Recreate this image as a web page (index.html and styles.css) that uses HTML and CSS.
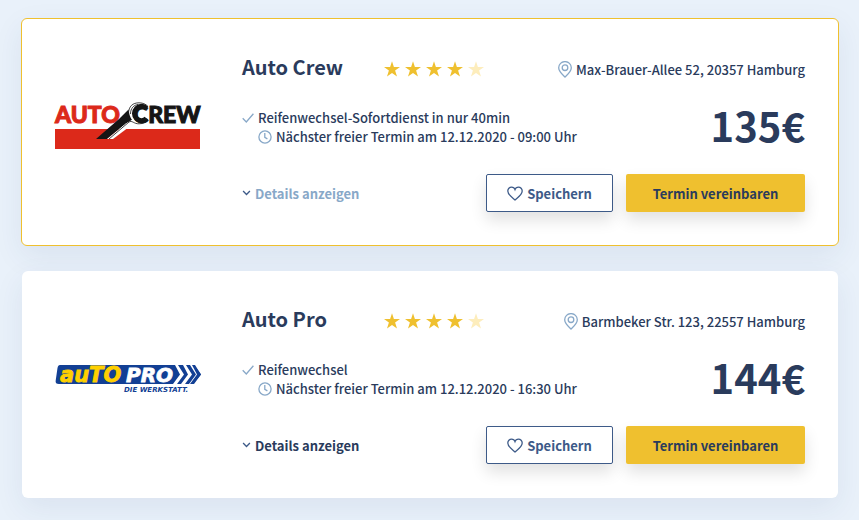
FILE: index.html
```html
<!DOCTYPE html>
<html lang="de">
<head>
<meta charset="utf-8">
<meta name="viewport" content="width=device-width, initial-scale=1">
<title>Werkstätten</title>
<link rel="stylesheet" href="styles.css">
</head>
<body>
<svg class="sprite" aria-hidden="true">
  <symbol id="star" viewBox="0 0 16 16"><path d="M8 .3 9.900 6H16l-4.900 3.600 1.900 5.900L8 11.900 3 15.500l1.900-5.900L0 6h6.100z" fill="currentColor"/></symbol>
  <symbol id="pin" viewBox="0 0 14 17"><path d="M7 16C4.500 13.600.7 10.500.7 6.700a6.300 6.100 0 0 1 12.600 0C13.300 10.500 9.500 13.600 7 16z"/><circle cx="7" cy="6.700" r="2.800"/></symbol>
  <symbol id="check" viewBox="0 0 12 10"><path d="M.7 5.300 4.300 9 11.400.8"/></symbol>
  <symbol id="clock" viewBox="0 0 14 14"><circle cx="7" cy="7" r="6.100"/><path d="M6.800 3v4.400l2.600 1.500"/></symbol>
  <symbol id="chevron" viewBox="0 0 8 6"><path d="M.6 1 4 4.500 7.400 1"/></symbol>
  <symbol id="heart" viewBox="0 0 16 15"><path d="M8 13.900C5.200 11.500.8 8.700.8 5A3.800 3.800 0 0 1 4.600 1.100C6.300 1.100 7.500 2.100 8 3.500 8.500 2.100 9.700 1.100 11.400 1.100A3.800 3.800 0 0 1 15.200 5C15.200 8.700 10.800 11.500 8 13.900z"/></symbol>
</svg>
<main class="results">
  <article class="card card-active">
    <svg class="logo" viewBox="0 0 147 50" role="img" aria-label="Auto Crew">
      <rect x="0" y="27" width="145" height="20" fill="#dc291a"/>
      <text class="crew-text crew-red" x="0" y="21">AUTO</text>
      <text class="crew-text" x="78" y="21">CREW</text>
      <path d="M41 37 64 17 73.500 7.500C74 12 75 15 77 18L71 21.500 52 37z" fill="#151515"/>
      <path d="M52 37 71 21.500 77 18 80 20.500 58 37z" fill="#fff"/>
      <path d="M54 37 74 20c3-2 5 2 10 1.800 4 0 7-1.500 9-3.800M73.500 12C73.500 4 78 .8 84 .8c4 0 7 1.500 9 3.700M75.500 12C75.500 6 79 3 83 2.500" fill="none" stroke="#151515" stroke-width=".8"/>
      <path d="M91.500 6.500a7 7.200 0 1 0 0 10" fill="none" stroke="#151515" stroke-width="5"/>
    </svg>
    <div class="content">
      <header class="head">
        <h2 class="name">Auto Crew</h2>
        <div class="stars" role="img" aria-label="4 von 5 Sternen">
          <svg><use href="#star"/></svg><svg><use href="#star"/></svg><svg><use href="#star"/></svg><svg><use href="#star"/></svg><svg class="off"><use href="#star"/></svg>
        </div>
        <address class="place"><svg class="line pin"><use href="#pin"/></svg>Max-Brauer-Allee 52, 20357 Hamburg</address>
      </header>
      <div class="info">
        <ul class="facts">
          <li><svg class="line check"><use href="#check"/></svg>Reifenwechsel-Sofortdienst in nur 40min</li>
          <li class="next"><svg class="line clock"><use href="#clock"/></svg>Nächster freier Termin am 12.12.2020 - 09:00 Uhr</li>
        </ul>
        <strong class="price">135€</strong>
      </div>
      <footer class="actions">
        <button type="button" class="details details-hover"><svg class="line chevron"><use href="#chevron"/></svg>Details anzeigen</button>
        <button type="button" class="btn save"><svg class="line heart"><use href="#heart"/></svg>Speichern</button>
        <button type="button" class="btn book">Termin vereinbaren</button>
      </footer>
    </div>
  </article>
  <article class="card">
    <svg class="logo" viewBox="0 0 147 50" role="img" aria-label="Auto Pro – Die Werkstatt">
      <path d="M5 11H139L146 20.500 138 30H4Q0 30 .7 26.500L2.500 14Q3 11 5 11z" fill="#123f94"/>
      <text class="pro-text pro-yellow" x="5" y="28">auTO</text>
      <text class="pro-text" x="71" y="28">PRO</text>
      <path d="M120 11h3l6 9.500-7 9.500h-4l7-9.500zM128 11h3l6 9.500-7 9.500h-4l7-9.500zM135 11h3l7 9.500-8 9.500h-3l7-9.500z" fill="#fff"/>
      <path d="M137 11h3l6 9.500-7 9.500h-4l7-9.500z" fill="#123f94"/>
      <text class="pro-claim" x="69" y="38">DIE WERKSTATT.</text>
    </svg>
    <div class="content">
      <header class="head">
        <h2 class="name">Auto Pro</h2>
        <div class="stars" role="img" aria-label="4 von 5 Sternen">
          <svg><use href="#star"/></svg><svg><use href="#star"/></svg><svg><use href="#star"/></svg><svg><use href="#star"/></svg><svg class="off"><use href="#star"/></svg>
        </div>
        <address class="place"><svg class="line pin"><use href="#pin"/></svg>Barmbeker Str. 123, 22557 Hamburg</address>
      </header>
      <div class="info">
        <ul class="facts">
          <li><svg class="line check"><use href="#check"/></svg>Reifenwechsel</li>
          <li class="next"><svg class="line clock"><use href="#clock"/></svg>Nächster freier Termin am 12.12.2020 - 16:30 Uhr</li>
        </ul>
        <strong class="price">144€</strong>
      </div>
      <footer class="actions">
        <button type="button" class="details"><svg class="line chevron"><use href="#chevron"/></svg>Details anzeigen</button>
        <button type="button" class="btn save"><svg class="line heart"><use href="#heart"/></svg>Speichern</button>
        <button type="button" class="btn book">Termin vereinbaren</button>
      </footer>
    </div>
  </article>
</main>
</body>
</html>
```
FILE: styles.css
```css
* { box-sizing: border-box; }
body {
  margin: 0;
  background: #e9f1fa;
  color: #2a3b5c;
  font: 500 13px/19px "Source Sans Pro", "Noto Sans CJK SC", sans-serif;
}
.sprite { position: absolute; width: 0; height: 0; }
.results {
  display: flex;
  flex-direction: column;
  gap: 25px;
  padding: 18px 20px 22px 21px;
}
.card {
  display: flex;
  align-items: center;
  gap: 40px;
  padding: 33px;
  border: 1px solid #efc02f;
  border-radius: 6px;
  background: #fff;
  box-shadow: 0 10px 30px rgba(42, 59, 120, .08);
}
.card:not(.card-active) { margin: 0 1px; padding-bottom: 34px; border-width: 0; }
.logo { flex: none; width: 147px; height: 50px; margin-top: -10px; overflow: visible; }
.crew-text { font: 900 23px Lato, sans-serif; fill: #151515; stroke: #151515; stroke-width: 1; }
.crew-red { fill: #dc291a; stroke: #dc291a; }
.pro-text { font: italic bold 20px "DejaVu Sans", sans-serif; fill: #fff; stroke: #fff; stroke-width: .8; }
.pro-yellow { font-size: 21px; fill: #ffd000; stroke: #ffd000; }
.pro-claim { font: italic bold 7px "DejaVu Sans", sans-serif; fill: #123f94; }
.content { flex: 1; min-width: 0; }
.head { display: flex; align-items: center; height: 34px; }
.name { width: 142px; margin: 0; font-size: 20px; line-height: 30px; padding-bottom: 4px; }
.stars { display: flex; gap: 5px; color: #efc02f; }
.stars svg { width: 16px; height: 16px; }
.stars .off { color: #fdedbc; }
.place { display: flex; align-items: center; gap: 4px; margin-left: auto; font-style: normal; }
.line { flex: none; fill: none; stroke: #88a8c8; stroke-width: 1.3; }
.pin { width: 14px; height: 17px; }
.check { width: 12px; height: 10px; }
.clock { width: 14px; height: 14px; }
.chevron { width: 9px; height: 6px; stroke: #3d5a88; }
.heart { width: 16px; height: 15px; stroke: #3d5a88; }
.info { display: flex; justify-content: space-between; align-items: center; height: 38px; margin: 22px 0 28px; }
.facts { margin: 0; padding: 0; list-style: none; }
.facts li { display: flex; align-items: center; gap: 4px; }
.facts .next { padding-left: 16px; }
.price { font-size: 40px; line-height: 38px; padding-bottom: 4px; }
.actions { display: flex; align-items: center; gap: 13px; }
button { font: inherit; font-weight: 700; color: inherit; cursor: pointer; }
.details {
  display: flex;
  align-items: center;
  gap: 4px;
  margin-right: auto;
  padding: 0;
  border: 0;
  background: none;
}
.details-hover { color: #88a8c8; }
.btn {
  display: flex;
  align-items: center;
  justify-content: center;
  gap: 4px;
  height: 38px;
  border: 0;
  border-radius: 2px;
  box-shadow: 0 8px 16px rgba(0, 0, 0, .12);
}
.save { width: 127px; border: 1px solid #3d5a88; background: #fff; color: #3d5a88; }
.book { width: 179px; background: #efc02f; }
```
